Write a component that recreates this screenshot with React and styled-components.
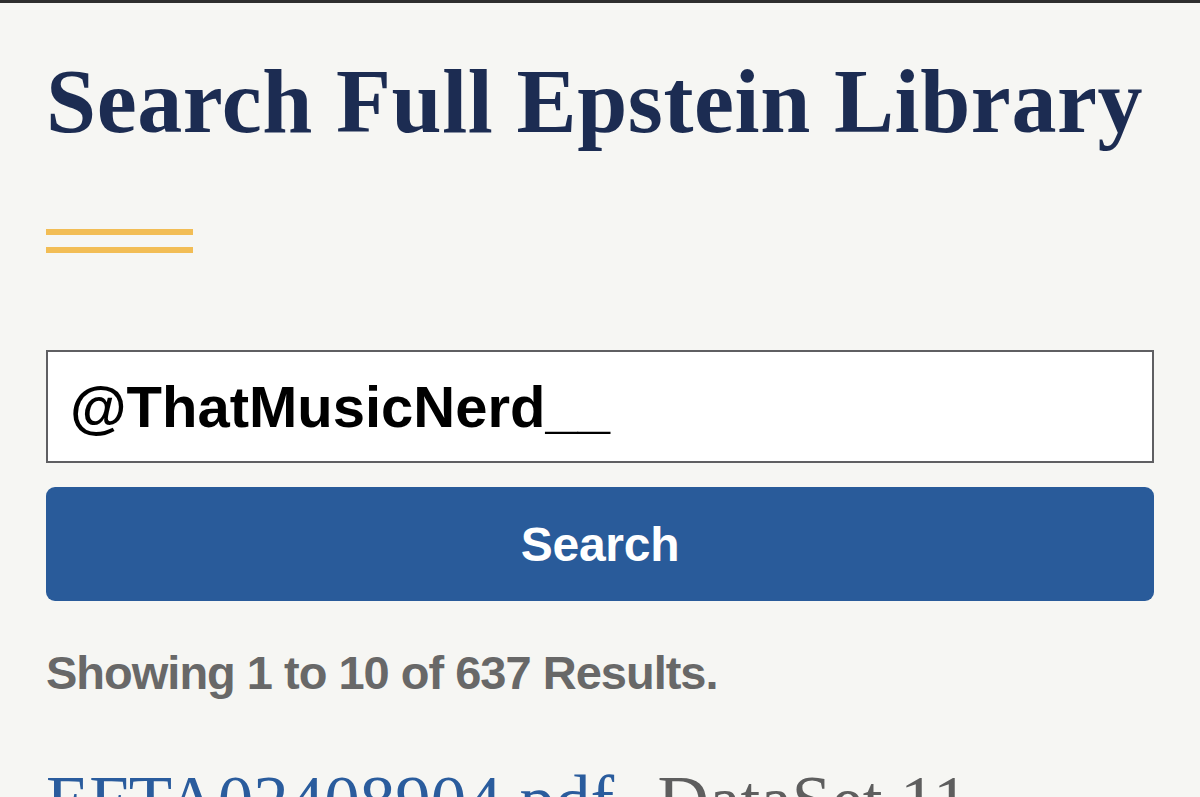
import React from "react";
import styled, { createGlobalStyle } from "styled-components";

const Global = createGlobalStyle`
  html, body { margin: 0; padding: 0; background: #f6f6f3; }
  body { overflow: hidden; }
`;

const Page = styled.div`
  box-sizing: border-box;
  width: 1200px;
  height: 797px;
  overflow: hidden;
  border-top: 3px solid #2e2e2e;
  padding: 0 46px;
  display: flex;
  flex-direction: column;
`;

const Title = styled.h1`
  margin: 44px 0 0;
  font-family: "Liberation Serif", serif;
  font-weight: 700;
  font-size: 90px;
  line-height: 110px;
  letter-spacing: 0.6px;
  color: #1c2c52;
  white-space: nowrap;
`;

const Rule = styled.div`
  margin-top: 72px;
  width: 147px;
  display: flex;
  flex-direction: column;
  gap: 12px;
`;

const RuleLine = styled.span`
  display: block;
  height: 6px;
  background: #f2bd55;
`;

const Form = styled.form`
  margin-top: 97px;
  display: flex;
  flex-direction: column;
  gap: 24px;
`;

const Input = styled.input`
  box-sizing: border-box;
  width: 100%;
  height: 113px;
  border: 2px solid #5f5f62;
  background: #fff;
  padding: 0 22px;
  font-family: "Liberation Sans", Arial, sans-serif;
  font-weight: 700;
  font-size: 58px;
  color: #000;
  outline: none;
`;

const Button = styled.button`
  box-sizing: border-box;
  width: 100%;
  height: 114px;
  border: none;
  border-radius: 9px;
  background: #295b9a;
  color: #fff;
  font-family: "Liberation Sans", Arial, sans-serif;
  font-weight: 700;
  font-size: 48px;
  letter-spacing: -0.3px;
`;

const Summary = styled.p`
  margin: 44px 0 0;
  font-family: "Liberation Sans", Arial, sans-serif;
  font-weight: 700;
  font-size: 47px;
  line-height: 56px;
  letter-spacing: -1px;
  color: #686868;
`;

const Result = styled.div`
  margin-top: 60px;
  display: flex;
  gap: 2px;
  font-family: "Liberation Serif", serif;
  font-size: 71px;
  line-height: 80px;
  white-space: nowrap;
`;

const FileLink = styled.a`
  color: #2a5c9d;
  text-decoration: underline;
  text-decoration-thickness: 3px;
`;

const DataSet = styled.span`
  color: #5e5e5e;
`;

export default function App() {
  return (
    <>
      <Global />
      <Page>
        <Title>Search Full Epstein Library</Title>
        <Rule>
          <RuleLine />
          <RuleLine />
        </Rule>
        <Form onSubmit={(e) => e.preventDefault()}>
          <Input defaultValue="@ThatMusicNerd__" />
          <Button type="submit">Search</Button>
        </Form>
        <Summary>Showing 1 to 10 of 637 Results.</Summary>
        <Result>
          <FileLink href="#">EFTA02408904.pdf</FileLink>
          <DataSet>- DataSet 11</DataSet>
        </Result>
      </Page>
    </>
  );
}
